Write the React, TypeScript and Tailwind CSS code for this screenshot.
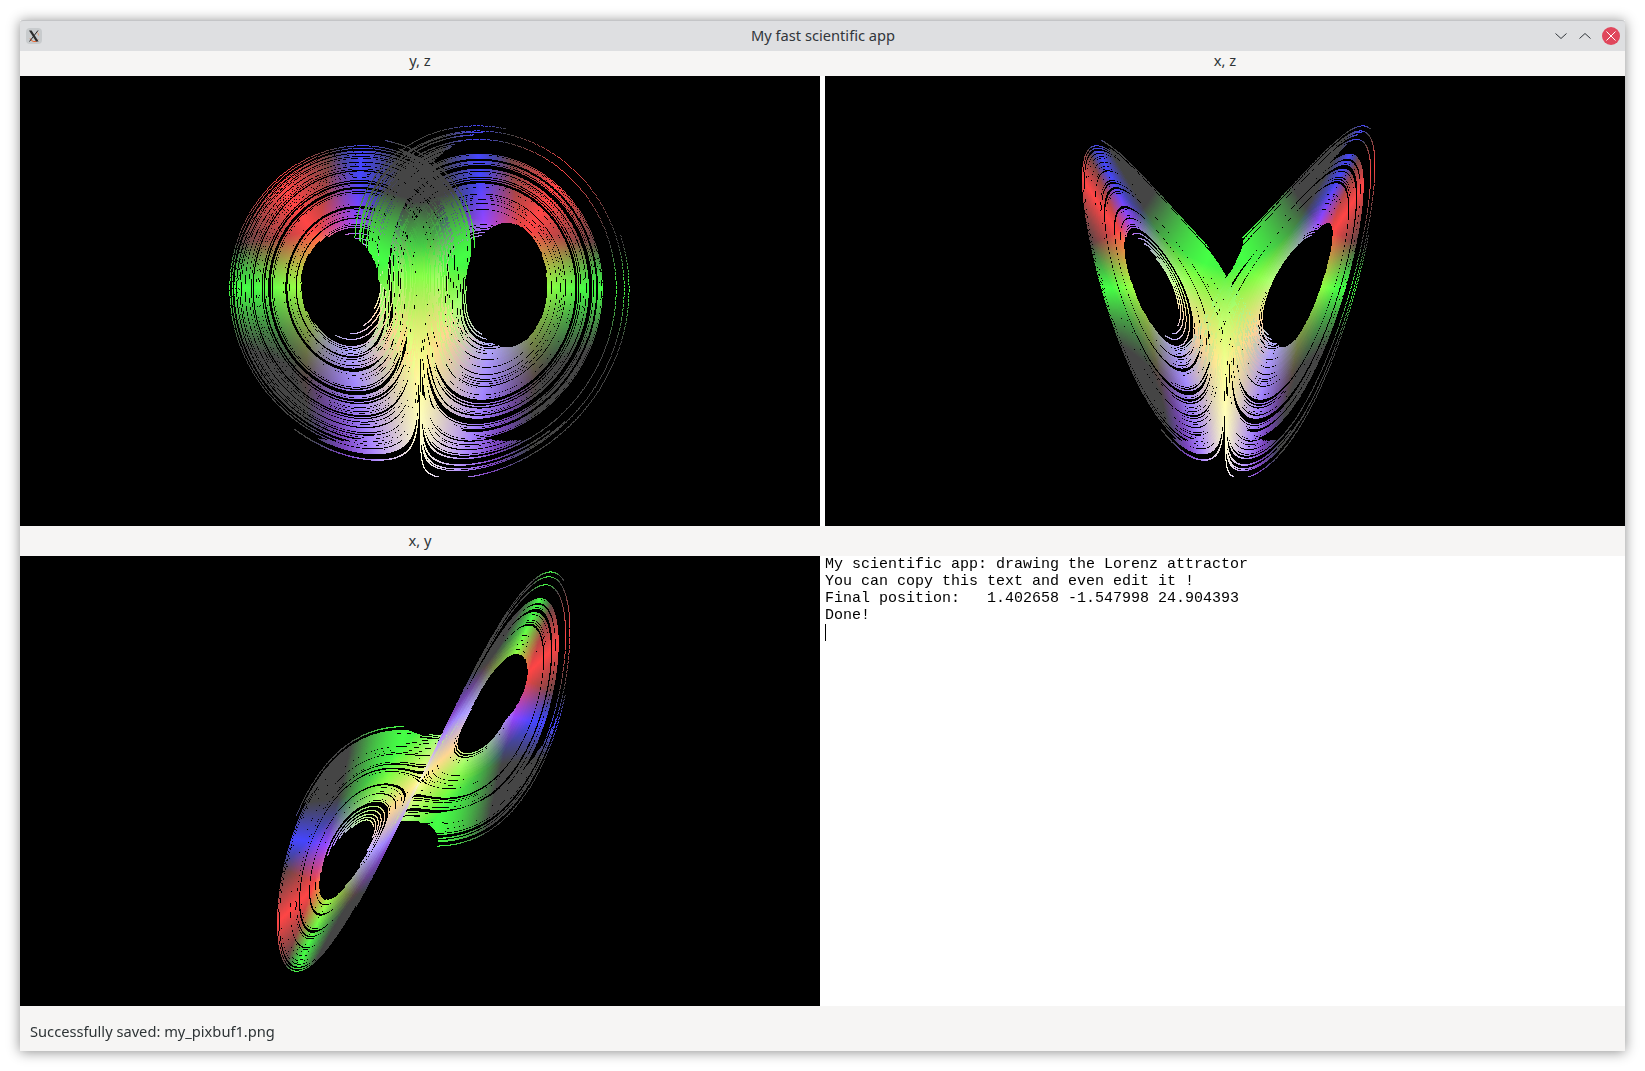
import { useEffect, useRef } from 'react';

const DT = 0.0005;
const INNER_STEPS = 300000;
const OUTER_STEPS = 60000;

// Lorenz attractor, leaving out what falls in the two holes or past the outer edge
function computePoints() {
  const pts = new Float32Array((INNER_STEPS + OUTER_STEPS) * 6);
  let x = -14.370732077238575;
  let y = -10.427888418476536;
  let z = 38.499460395401016;
  let count = 0;
  for (let n = 0; n < 12000000 && count < INNER_STEPS + OUTER_STEPS; n++) {
    const dx = 10 * (y - x);
    const dy = x * (28 - z) - y;
    const dz = x * y - (8 / 3) * z;
    x += dx * DT;
    y += dy * DT;
    z += dz * DT;

    const a = (y + 10) / 5;
    const b = (z - 27) / 6.5;
    const c = (y - 10.85) / 5.2;
    const d = (z - 27) / 8;
    if (a * a + b * b < 0.95 || c * c + d * d < 0.95) continue;
    if (y < -26.1 || y > 27.6 || x < -19.75 || x > 20.5) continue;
    if (z > (x < 0 ? 46.2 : 47.5) || z < 3) continue;

    // once the band is filled, only the outer rings are still added
    if (count >= INNER_STEPS) {
      const u = x < 0 ? (y + 10) / 15 : (y - 10.85) / 15;
      const v = (z - 27) / 19.5;
      if (u * u + v * v < 1) continue;
    }

    pts.set([x, y, z, dx, dy, dz], count * 6);
    count++;
  }
  return { pts, count };
}

const lorenz = computePoints();
const channel = (d: number, k: number) => 255 * Math.max(0.27, 1 - Math.abs(d) / k);

function Plot({ mode }: { mode: 'yz' | 'xz' | 'xy' }) {
  const ref = useRef<HTMLCanvasElement>(null);
  useEffect(() => {
    const ctx = ref.current!.getContext('2d')!;
    const img = ctx.createImageData(800, 450);
    for (let i = 3; i < img.data.length; i += 4) img.data[i] = 255;
    const { pts, count } = lorenz;
    for (let n = 0; n < count; n++) {
      const o = n * 6;
      const px = mode === 'yz' ? 400 + 8 * pts[o + 1] : 400 + 8 * pts[o];
      const py = mode === 'xy' ? 225 - 8 * pts[o + 1] : 425 - 8 * pts[o + 2];
      const i = (Math.floor(py) * 800 + Math.floor(px)) * 4;
      img.data[i] = channel(pts[o + 3], 90);
      img.data[i + 1] = channel(pts[o + 4], 125);
      img.data[i + 2] = channel(pts[o + 5], 105);
    }
    ctx.putImageData(img, 0, 0);
  }, [mode]);
  return <canvas ref={ref} width={800} height={450} className="block h-[450px] w-[800px] bg-black" />;
}

function XLogo() {
  return (
    <div className="flex h-4 w-4 items-center justify-center rounded-sm bg-[#c8cbcd]">
      <svg width="14" height="14" viewBox="0 0 14 14" fill="none">
        <path d="M3.2 9.5a4.5 4.5 0 0 0 8 1.2" stroke="#e8622c" strokeWidth="1" />
        <path d="M10.5 3.5a4.5 4.5 0 0 1 1 3" stroke="#e8a07c" strokeWidth="1" />
        <path d="M2 1.5h2.6l7 11H9z" fill="#2b2b2b" />
        <path d="M11 1.5 2.5 12.5" stroke="#2b2b2b" strokeWidth="1" />
      </svg>
    </div>
  );
}

function TitleBar() {
  return (
    <div className="flex h-[31px] items-center rounded-t-[3px] border-t border-[#c4c5c7] bg-[#dedfe1] pl-1.5 pr-[5px]">
      <div className="w-20">
        <XLogo />
      </div>
      <div className="flex-1 -translate-y-px text-center text-[14.67px] text-[#31363b]">My fast scientific app</div>
      <div className="flex w-20 items-center justify-end gap-2.5">
        <svg width="14" height="14" viewBox="0 0 14 14" fill="none" stroke="#31363b" strokeWidth="1">
          <path d="m1.5 4.5 5.5 5 5.5-5" />
        </svg>
        <svg width="14" height="14" viewBox="0 0 14 14" fill="none" stroke="#31363b" strokeWidth="1">
          <path d="m1.5 9.5 5.5-5 5.5 5" />
        </svg>
        <div className="flex h-[18px] w-[18px] items-center justify-center rounded-full bg-[#e0475c]">
          <svg width="12" height="12" viewBox="0 0 12 12" fill="none" stroke="#ffffff" strokeWidth="1">
            <path d="m1.5 1.5 9 9M10.5 1.5l-9 9" />
          </svg>
        </div>
      </div>
    </div>
  );
}

function TextPanel() {
  return (
    <div className="h-[450px] bg-white font-['Liberation_Mono',monospace] text-[15px] leading-[17px] whitespace-pre text-black">
      <div>My scientific app: drawing the Lorenz attractor</div>
      <div>You can copy this text and even edit it !</div>
      <div>Final position:   1.402658 -1.547998 24.904393</div>
      <div>Done!</div>
      <div className="h-[17px] w-px bg-black" />
    </div>
  );
}

export default function App() {
  return (
    <div className="min-h-[1071px] bg-white pt-5 pl-5 font-['Noto_Sans',sans-serif] text-[14.67px] text-[#2e3436]">
      <div className="w-[1605px] bg-[#f6f5f4] shadow-[0_1px_12px_rgba(0,0,0,0.45)]">
        <TitleBar />
        <div className="grid grid-cols-[800px_5px_800px] bg-white">
          <div className="h-[25px] bg-[#f6f5f4] text-center leading-[18px]">y, z</div>
          <div className="bg-[#f6f5f4]" />
          <div className="bg-[#f6f5f4] text-center leading-[18px]">x, z</div>
          <Plot mode="yz" />
          <div />
          <Plot mode="xz" />
          <div className="h-[30px] bg-[#f6f5f4] text-center leading-[28px]">x, y</div>
          <div className="bg-[#f6f5f4]" />
          <div className="bg-[#f6f5f4]" />
          <Plot mode="xy" />
          <div />
          <TextPanel />
        </div>
        <div className="flex h-[45px] items-center px-2.5 pt-1">Successfully saved: my_pixbuf1.png</div>
      </div>
    </div>
  );
}
